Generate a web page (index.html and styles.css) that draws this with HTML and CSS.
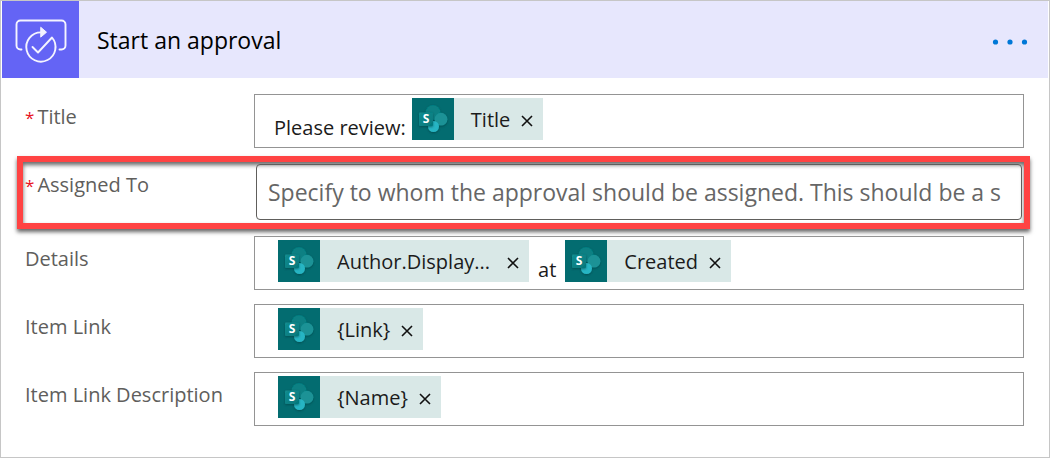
FILE: index.html
```html
<!DOCTYPE html>
<html lang="en">
<head>
<meta charset="utf-8">
<title>Start an approval</title>
<link rel="stylesheet" href="styles.css">
</head>
<body>
<svg class="defs" aria-hidden="true">
  <defs>
    <filter id="soft" x="-30%" y="-30%" width="160%" height="160%"><feDropShadow dx="0" dy="1" stdDeviation="1.2" flood-color="#023c40" flood-opacity=".6"/></filter>
    <linearGradient id="teal" x1="0" y1="0" x2="1" y2="1"><stop offset="0" stop-color="#138d90"/><stop offset="1" stop-color="#04777b"/></linearGradient>
  </defs>
  <symbol id="sharepoint" viewBox="0 0 42 42">
    <g filter="url(#soft)">
      <circle cx="21" cy="14.500" r="7.500" fill="#078083"/>
      <circle cx="29" cy="21.200" r="6.400" fill="#1b9296"/>
      <circle cx="21.500" cy="28.500" r="5.500" fill="#27b5c3"/>
    </g>
    <rect x="7" y="14.500" width="14" height="13.500" rx="1" fill="url(#teal)" filter="url(#soft)"/>
  </symbol>
  <symbol id="close" viewBox="0 0 12 12">
    <path d="M1 1 11 11M11 1 1 11" fill="none" stroke="#111" stroke-width="1.600"/>
  </symbol>
</svg>
<main class="card">
  <header class="card-header">
    <span class="card-icon">
      <svg viewBox="0 0 77 77" aria-hidden="true" fill="none" stroke="#f4f4ff" stroke-width="1.900" stroke-linecap="round" stroke-linejoin="round">
        <path d="M19.500 48.500h-1a4 4 0 0 1-4-4V23.500a4 4 0 0 1 4-4h41a4 4 0 0 1 4 4v21a4 4 0 0 1-4 4H57.500"/>
        <path d="M39 31.400A14.600 14.600 0 1 0 50 36.500L36 51.500 30.500 46"/>
        <path d="M39 26.500 44.500 31.200 39 35.900Z" fill="#f4f4ff" stroke-width="1"/>
      </svg>
    </span>
    <h1 class="card-title">Start an approval</h1>
    <button class="menu" type="button" aria-label="More options">
      <svg viewBox="0 0 36 6" aria-hidden="true" fill="#0078d7"><circle cx="3.500" cy="3" r="2.600"/><circle cx="18" cy="3" r="2.600"/><circle cx="32.500" cy="3" r="2.600"/></svg>
    </button>
  </header>
  <form class="fields">
    <div class="row">
      <span class="label" id="l-title"><span class="required">*</span>Title</span>
      <div class="field field-text" role="textbox" aria-labelledby="l-title">
        <span class="plain">Please review:</span>
        <span class="token"><svg class="token-icon"><use href="#sharepoint"/><text x="14" y="25" text-anchor="middle" class="logo-letter">S</text></svg><span class="token-name">Title</span><button class="remove" type="button" aria-label="Remove Title"><svg><use href="#close"/></svg></button></span>
      </div>
    </div>
    <div class="row highlighted">
      <label class="label" for="assigned"><span class="required">*</span>Assigned To</label>
      <input class="field-input" id="assigned" type="text" placeholder="Specify to whom the approval should be assigned. This should be a s">
    </div>
    <div class="row">
      <span class="label" id="l-details">Details</span>
      <div class="field" role="textbox" aria-labelledby="l-details">
        <span class="token"><svg class="token-icon"><use href="#sharepoint"/><text x="14" y="25" text-anchor="middle" class="logo-letter">S</text></svg><span class="token-name token-name-long">Author.Display...</span><button class="remove" type="button" aria-label="Remove Author"><svg><use href="#close"/></svg></button></span>
        <span class="plain">at</span>
        <span class="token"><svg class="token-icon"><use href="#sharepoint"/><text x="14" y="25" text-anchor="middle" class="logo-letter">S</text></svg><span class="token-name">Created</span><button class="remove" type="button" aria-label="Remove Created"><svg><use href="#close"/></svg></button></span>
      </div>
    </div>
    <div class="row">
      <span class="label" id="l-link">Item Link</span>
      <div class="field" role="textbox" aria-labelledby="l-link">
        <span class="token"><svg class="token-icon"><use href="#sharepoint"/><text x="14" y="25" text-anchor="middle" class="logo-letter">S</text></svg><span class="token-name">{Link}</span><button class="remove" type="button" aria-label="Remove Link"><svg><use href="#close"/></svg></button></span>
      </div>
    </div>
    <div class="row">
      <span class="label" id="l-desc">Item Link Description</span>
      <div class="field" role="textbox" aria-labelledby="l-desc">
        <span class="token"><svg class="token-icon"><use href="#sharepoint"/><text x="14" y="25" text-anchor="middle" class="logo-letter">S</text></svg><span class="token-name">{Name}</span><button class="remove" type="button" aria-label="Remove Name"><svg><use href="#close"/></svg></button></span>
      </div>
    </div>
  </form>
</main>
</body>
</html>
```
FILE: styles.css
```css
* { box-sizing: border-box; }
body {
  margin: 0;
  background: #fff;
  color: #1b1b1b;
  font: 20px/28px "Open Sans", "Noto Sans", sans-serif;
}
button { padding: 0; border: 0; background: none; cursor: pointer; }
svg { display: block; }
.defs { position: absolute; width: 0; height: 0; }
.logo-letter { fill: #fff; font: 700 12px "Open Sans", sans-serif; }
.card { min-height: 100vh; border: 1px solid #c6c6c6; }
.card-header {
  display: flex;
  align-items: center;
  margin: 0 1px;
  padding-right: 20px;
  background: #e7e7fd;
}
.card-icon { width: 77px; height: 77px; background: #6464f5; }
.card-title {
  flex: 1;
  margin: 0;
  padding-left: 18px;
  color: #000;
  font-size: 23px;
  font-weight: 400;
}
.menu { padding-top: 5px; }
.menu svg { width: 36px; height: 6px; }
.fields {
  display: flex;
  flex-direction: column;
  gap: 14px;
  padding: 16px 25px 30px 24px;
}
.row { display: grid; grid-template-columns: 229px 1fr; }
.label { padding-top: 9px; color: #605e5c; }
.required { margin-right: 3px; color: #e81123; font-size: 17px; }
.field {
  display: flex;
  min-width: 0;
  height: 54px;
  padding: 3px 23px;
  border: 1px solid #949494;
}
.field-text { padding-left: 19px; }
.plain { padding: 16px 9px 0; }
.field-text .plain { padding: 16px 6px 0 0; }
.token { display: flex; align-items: center; height: 42px; padding-right: 10px; background: #d9e8e7; }
.token-icon { width: 42px; height: 42px; background: #036c70; }
.token-name { padding: 2px 11px 0 17px; }
.token-name-long { padding-right: 17px; }
.remove { padding-top: 3px; }
.remove svg { width: 12px; height: 12px; }
.highlighted {
  margin: -6px -6px -7px -8px;
  padding: 2px 2px 3px;
  border: 6px solid #ff4343;
  box-shadow: 0 3px 4px rgba(0, 0, 0, .6), inset 0 3px 4px rgba(0, 0, 0, .6);
  grid-template-columns: 231px 1fr;
}
.highlighted .label { padding-top: 7px; }
.field-input {
  width: 100%;
  min-width: 0;
  height: 56px;
  padding: 0 11px;
  border: 1px solid #605e5c;
  border-radius: 4px;
  background: transparent;
  font: inherit;
  font-size: 23px;
}
.field-input::placeholder { color: #666; opacity: 1; }
```
